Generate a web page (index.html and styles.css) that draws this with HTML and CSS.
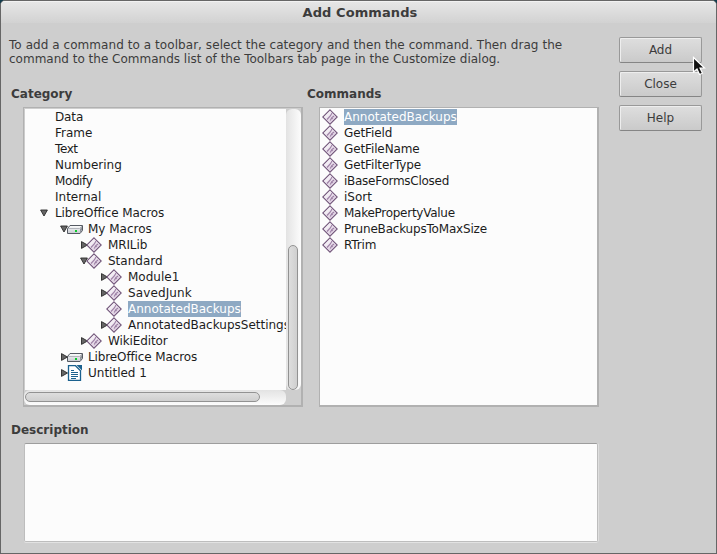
FILE: index.html
```html
<!DOCTYPE html>
<html lang="en">
<head>
<meta charset="utf-8">
<title>Add Commands</title>
<link rel="stylesheet" href="styles.css">
</head>
<body>
<svg class="defs" width="0" height="0">
  <defs>
    <linearGradient id="g-gem" x1="0" y1="0" x2="1" y2="1"><stop offset=".2" stop-color="#fff"/><stop offset="1" stop-color="#c3a9c8"/></linearGradient>
    <linearGradient id="g-drive" x1="0" y1="0" x2="0" y2="1"><stop offset="0" stop-color="#fff"/><stop offset="1" stop-color="#c4c8ce"/></linearGradient>
    <symbol id="gem" viewBox="0 0 16 16">
      <path d="M8 .8 15.2 8 8 15.2.8 8Z" fill="url(#g-gem)" stroke="#74597c" stroke-width="1.1"/>
      <path d="M8 2.4 13.6 8 8 13.6 2.4 8Z" fill="none" stroke="#eadfec" stroke-width=".7"/>
      <path d="M10 4 8.300 7 5 10.500M8.300 11.500 9.800 8.500 12 7M9.800 8.500 10.500 10" fill="none" stroke="#9c7fa5" stroke-width="1.1"/>
    </symbol>
    <symbol id="drive" viewBox="0 0 16 16">
      <path d="M3 4.500H15.500V9.500L13 12.500H.500V7.500Z" fill="url(#g-drive)" stroke="#555a63"/>
      <path d="M1 7.500H12.500L15 5" fill="none" stroke="#a3a7ae" stroke-width=".8"/>
      <path d="M13 8 15 5.500V9L13 12Z" fill="#8e9299"/>
      <path d="M8 9h2v2H8Z" fill="#0ccb2c"/>
    </symbol>
    <symbol id="doc" viewBox="0 0 16 16">
      <path d="M1.500.700H8.500L13.500 5.700V15.300H1.500Z" fill="#fff" stroke="#1b618e" stroke-width="1.300"/>
      <path d="M9.500 0H15V5.500Z" fill="#1b618e"/>
      <path d="M4 5.500h3M4 7.500h7M4 9.500h7M4 11.500h7M4 13.500h5" stroke="#1b618e"/>
    </symbol>
    <symbol id="open" viewBox="0 0 8 8"><path d="M.6 1h6.800L4 7Z" fill="#666" stroke="#2a2a2a" stroke-width=".9"/></symbol>
    <symbol id="shut" viewBox="0 0 8 8"><path d="M1.500.6v6.800L7.500 4Z" fill="#666" stroke="#2a2a2a" stroke-width=".9"/></symbol>
  </defs>
</svg>
<div class="window">
  <header class="titlebar">Add Commands</header>
  <main class="content">
    <div class="main-col">
      <p class="intro"><span class="line1">To add a command to a toolbar, select the category and then the command. Then drag the</span><br><span>command to the Commands list of the Toolbars tab page in the Customize dialog.</span></p>
      <div class="lists">
        <section>
          <h2>Category</h2>
          <div class="box tree-box">
            <div class="tree">
              <div class="row plain"><span class="snug">Data</span></div>
              <div class="row plain"><span>Frame</span></div>
              <div class="row plain"><span class="tight">Text</span></div>
              <div class="row plain"><span>Numbering</span></div>
              <div class="row plain"><span class="tight">Modify</span></div>
              <div class="row plain"><span>Internal</span></div>
              <div class="row root"><svg class="arrow"><use href="#open"/></svg><span class="snug">LibreOffice Macros</span></div>
              <div class="row l1"><svg class="arrow"><use href="#open"/></svg><svg class="icon"><use href="#drive"/></svg><span>My Macros</span></div>
              <div class="row l2"><svg class="arrow"><use href="#shut"/></svg><svg class="icon gem"><use href="#gem"/></svg><span class="snug">MRILib</span></div>
              <div class="row l2"><svg class="arrow"><use href="#open"/></svg><svg class="icon gem"><use href="#gem"/></svg><span>Standard</span></div>
              <div class="row l3"><svg class="arrow"><use href="#shut"/></svg><svg class="icon gem"><use href="#gem"/></svg><span>Module1</span></div>
              <div class="row l3"><svg class="arrow"><use href="#shut"/></svg><svg class="icon gem"><use href="#gem"/></svg><span class="loose">SavedJunk</span></div>
              <div class="row l3"><i class="arrow"></i><svg class="icon gem"><use href="#gem"/></svg><span class="selected">AnnotatedBackups</span></div>
              <div class="row l3"><svg class="arrow"><use href="#shut"/></svg><svg class="icon gem"><use href="#gem"/></svg><span>AnnotatedBackupsSettings</span></div>
              <div class="row l2"><svg class="arrow"><use href="#shut"/></svg><svg class="icon gem"><use href="#gem"/></svg><span class="snug">WikiEditor</span></div>
              <div class="row l1"><svg class="arrow"><use href="#shut"/></svg><svg class="icon"><use href="#drive"/></svg><span class="snug">LibreOffice Macros</span></div>
              <div class="row l1"><svg class="arrow"><use href="#shut"/></svg><svg class="icon"><use href="#doc"/></svg><span>Untitled 1</span></div>
            </div>
            <div class="vbar"><div class="vthumb"></div></div>
            <div class="hbar"><div class="hthumb"></div></div>
          </div>
        </section>
        <section>
          <h2>Commands</h2>
          <div class="box commands">
            <div class="row"><svg class="icon gem"><use href="#gem"/></svg><span class="selected">AnnotatedBackups</span></div>
            <div class="row"><svg class="icon gem"><use href="#gem"/></svg><span class="snug">GetField</span></div>
            <div class="row"><svg class="icon gem"><use href="#gem"/></svg><span class="snug">GetFileName</span></div>
            <div class="row"><svg class="icon gem"><use href="#gem"/></svg><span class="snug">GetFilterType</span></div>
            <div class="row"><svg class="icon gem"><use href="#gem"/></svg><span class="close">iBaseFormsClosed</span></div>
            <div class="row"><svg class="icon gem"><use href="#gem"/></svg><span>iSort</span></div>
            <div class="row"><svg class="icon gem"><use href="#gem"/></svg><span class="close">MakePropertyValue</span></div>
            <div class="row"><svg class="icon gem"><use href="#gem"/></svg><span class="near">PruneBackupsToMaxSize</span></div>
            <div class="row"><svg class="icon gem"><use href="#gem"/></svg><span class="snug">RTrim</span></div>
          </div>
        </section>
      </div>
      <h2 class="desc-title">Description</h2>
      <div class="description"></div>
    </div>
    <div class="buttons">
      <button>Add</button>
      <button>Close</button>
      <button>Help</button>
    </div>
  </main>
  <svg class="cursor" viewBox="0 0 14 20"><path d="M1.500 1.500V16L5 13l2.500 5.500 3-1.300L8 12h4.500Z" fill="#111" stroke="#fff" stroke-width="1.200"/></svg>
</div>
</body>
</html>
```
FILE: styles.css
```css
* { box-sizing: border-box; }
body {
  margin: 0;
  background: #123c4c;
  font: 12px/16px "DejaVu Sans", sans-serif;
  color: #3c3c3c;
}
.defs { position: absolute; }
.window {
  position: relative;
  width: 717px;
  height: 554px;
  background: #cecece;
  border: 1px solid #666;
  border-radius: 5px 5px 0 0;
  overflow: hidden;
}
.titlebar {
  height: 22px;
  padding-left: 3px;
  border-top: 1px solid #f2f2f2;
  background: linear-gradient(#e6e6e6, #d2d2d2);
  text-align: center;
  font-weight: bold;
  font-size: 13px;
  line-height: 21px;
  letter-spacing: .08px;
}
.content { display: flex; }
.main-col { width: 597px; padding: 15px 0 0 7px; }
.intro { margin: 0; padding-left: 1px; line-height: 14px; height: 48px; white-space: nowrap; }
.line1 { letter-spacing: .06px; }
.lists { display: flex; gap: 4px; }
.lists section { width: 292px; }
h2 { margin: 0; padding-left: 3px; font-size: 12px; line-height: 17px; height: 21px; }
.box {
  width: 280px;
  height: 300px;
  margin-left: 15px;
  border: 2px solid #b5b5b5;
  border-width: 1px 2px 2px 1px;
  border-color: #b1b1b1;
  background: #fcfcfc;
  color: #1c1c1c;
  padding-top: 1px;
}
.row { display: flex; align-items: center; height: 16px; white-space: nowrap; }
.tree-box {
  display: grid;
  grid-template: 281px 15px / 262px 15px;
  background: #cecece;
}
.tree { overflow: hidden; background: #fcfcfc; border-left: 1px solid #ccc; }
.plain { padding-left: 30px; }
.root { padding-left: 14px; }
.root .arrow { margin-right: 8px; }
.l1 { padding-left: 34px; }
.l2 { padding-left: 54px; }
.l3 { padding-left: 74px; }
.arrow { width: 8px; height: 8px; flex: none; position: relative; left: 1px; }
.icon { width: 16px; height: 16px; flex: none; margin-right: 5px; }
.gem { position: relative; left: -1px; }
.loose { letter-spacing: .12px; }
.snug { letter-spacing: -.12px; }
.near { letter-spacing: -.19px; }
.close { letter-spacing: -.27px; }
.tight { letter-spacing: -.4px; }
.selected { background: #8ea9c3; color: #fff; }
.vbar {
  padding: 136px 2px 0 2px;
  background: linear-gradient(90deg, #e3e3e3, #fcfcfc);
  border-radius: 6px;
}
.vthumb {
  width: 10px;
  height: 145px;
  border: 1px solid #929292;
  border-radius: 5px;
  background: linear-gradient(90deg, #dedede, #cfcfcf);
}
.hbar {
  padding: 2px 0 0 1px;
  background: linear-gradient(#e3e3e3, #fcfcfc);
  border-radius: 6px;
}
.hthumb {
  width: 235px;
  height: 10px;
  border: 1px solid #929292;
  border-radius: 5px;
  background: linear-gradient(#dedede, #cfcfcf);
}
.desc-title { margin-top: 15px; }
.commands { padding-left: 3px; }
.description {
  width: 574px;
  height: 99px;
  margin-left: 16px;
  border: 1px solid #bdbdbd;
  border-top-color: #9d9d9d;
  border-radius: 2px;
  background: #fcfcfc;
  box-shadow: 0 1px #e2e2e2, 1px 0 #dedede;
}
.buttons { display: flex; flex-direction: column; gap: 8px; margin: 14px 0 0 21px; }
button {
  width: 83px;
  height: 26px;
  padding: 0;
  border: 1px solid #999;
  border-bottom-color: #858585;
  border-radius: 2px;
  background: linear-gradient(#dedede, #cacaca);
  box-shadow: inset 1px 1px #eee;
  font: inherit;
  color: #3c3c3c;
}
.cursor { position: absolute; left: 691px; top: 55px; width: 14px; height: 20px; }
```
